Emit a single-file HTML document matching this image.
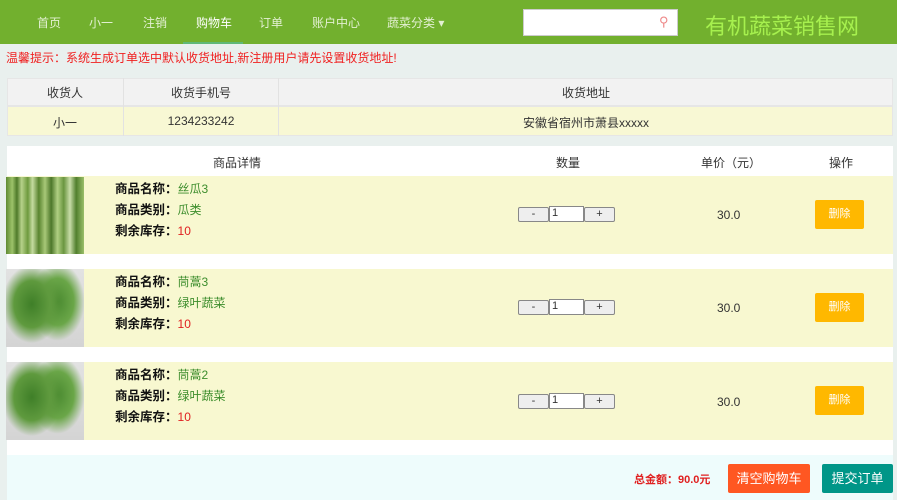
<!DOCTYPE html>
<html><head><meta charset="utf-8"><style>
*{margin:0;padding:0;box-sizing:border-box}
body{width:897px;height:500px;overflow:hidden;background:#e9f0ee;font-family:"Liberation Sans","Noto Sans CJK SC",sans-serif;font-size:12px;color:#333;position:relative}
.a{position:absolute}
.nav{left:0;top:0;width:897px;height:44px;background:#72b02e}
.nav span{position:absolute;top:14px;color:#e3f0d2;font-size:12px}
.c{text-align:center}
.img1{background:linear-gradient(90deg,#5f8a32 0,#9cc26a 8%,#4f7a2a 14%,#b7d28a 20%,#6e9a3e 28%,#c5dba0 34%,#5a8530 42%,#a8c878 50%,#4d772a 58%,#b0cf82 66%,#6a9640 74%,#c8dca8 82%,#52802e 90%,#9abf6a 100%)}
.img2{background:radial-gradient(ellipse 38% 50% at 33% 45%,#3f7f28 0,#5f9a3e 60%,transparent 100%),radial-gradient(ellipse 35% 50% at 66% 42%,#4a8a30 0,#6aa648 60%,transparent 100%),linear-gradient(#e2e2e2,#d4d4d4)}
.row{left:7px;width:886px;height:78px;background:#f8f8d0}
.lbl{font-weight:bold;color:#111;font-size:12.5px;line-height:21px}
.g{color:#3c8d2c;font-weight:normal;font-size:12px}
.r{color:#e02020;font-weight:normal;font-size:12px}
.qb{height:15px;border:1px solid #888;background:#eee;border-radius:2px;font-size:11px;text-align:center;line-height:12px}
.del{width:49px;height:29px;background:#ffb800;color:#fff;font-size:11px;text-align:center;line-height:29px;border-radius:2px}
</style></head><body>
<div class="a nav">
<span style="left:37px">首页</span><span style="left:89px">小一</span><span style="left:143px">注销</span><span style="left:196px;color:#fff">购物车</span><span style="left:259px">订单</span><span style="left:312px">账户中心</span><span style="left:387px">蔬菜分类 ▾</span>
<div class="a" style="left:183px;top:42px;width:60px;height:2px;background:#5fb878"></div>
<div class="a" style="left:523px;top:9px;width:155px;height:27px;background:#fff;border:1px solid #ccc"></div>
<div class="a" style="left:659px;top:14px;color:#e88;font-size:13px">⚲</div>
<div class="a" style="left:705px;top:9px;color:#a6f04e;font-size:22px">有机蔬菜销售网</div>
</div>
<div class="a" style="left:6px;top:49px;color:#f02020;font-size:12px">温馨提示：系统生成订单选中默认收货地址,新注册用户请先设置收货地址!</div>
<div class="a" style="left:7px;top:78px;width:886px;height:28px;background:#f2f2f2;border:1px solid #e6e6e6"></div>
<div class="a" style="left:7px;top:106px;width:886px;height:30px;background:#f8f8d4;border:1px solid #e6e6e6"></div>
<div class="a" style="left:123px;top:78px;width:1px;height:58px;background:#e2e2e2"></div>
<div class="a" style="left:278px;top:78px;width:1px;height:58px;background:#e2e2e2"></div>
<div class="a c" style="left:7px;top:84px;width:116px">收货人</div>
<div class="a c" style="left:124px;top:84px;width:154px">收货手机号</div>
<div class="a c" style="left:279px;top:84px;width:614px">收货地址</div>
<div class="a c" style="left:7px;top:114px;width:116px">小一</div>
<div class="a c" style="left:124px;top:114px;width:154px">1234233242</div>
<div class="a c" style="left:279px;top:114px;width:614px">安徽省宿州市萧县xxxxx</div>

<div class="a" style="left:7px;top:146px;width:886px;height:309px;background:#fff"></div>
<div class="a" style="left:213px;top:154px">商品详情</div>
<div class="a" style="left:556px;top:154px">数量</div>
<div class="a" style="left:701px;top:154px">单价（元）</div>
<div class="a" style="left:829px;top:154px">操作</div>

<div class="a row" style="top:176px"></div>
<div class="a row" style="top:269px"></div>
<div class="a row" style="top:362px"></div>
<div class="a img1" style="left:6px;top:177px;width:78px;height:77px"></div>
<div class="a img2" style="left:6px;top:269px;width:78px;height:78px"></div>
<div class="a img2" style="left:6px;top:362px;width:78px;height:78px"></div>

<div class="a lbl" style="left:115px;top:179px">商品名称：<span class="g">丝瓜3</span><br>商品类别：<span class="g">瓜类</span><br>剩余库存：<span class="r">10</span></div>
<div class="a lbl" style="left:115px;top:272px">商品名称：<span class="g">茼蒿3</span><br>商品类别：<span class="g">绿叶蔬菜</span><br>剩余库存：<span class="r">10</span></div>
<div class="a lbl" style="left:115px;top:365px">商品名称：<span class="g">茼蒿2</span><br>商品类别：<span class="g">绿叶蔬菜</span><br>剩余库存：<span class="r">10</span></div>

<div class="a qb" style="left:518px;top:207px;width:31px">-</div><div class="a" style="left:549px;top:206px;width:35px;height:16px;background:#fff;border:1px solid #888;font-size:11px;padding-left:2px">1</div><div class="a qb" style="left:584px;top:207px;width:31px">+</div>
<div class="a qb" style="left:518px;top:300px;width:31px">-</div><div class="a" style="left:549px;top:299px;width:35px;height:16px;background:#fff;border:1px solid #888;font-size:11px;padding-left:2px">1</div><div class="a qb" style="left:584px;top:300px;width:31px">+</div>
<div class="a qb" style="left:518px;top:394px;width:31px">-</div><div class="a" style="left:549px;top:393px;width:35px;height:16px;background:#fff;border:1px solid #888;font-size:11px;padding-left:2px">1</div><div class="a qb" style="left:584px;top:394px;width:31px">+</div>

<div class="a" style="left:717px;top:208px">30.0</div>
<div class="a" style="left:717px;top:301px">30.0</div>
<div class="a" style="left:717px;top:395px">30.0</div>
<div class="a del" style="left:815px;top:200px">删除</div>
<div class="a del" style="left:815px;top:293px">删除</div>
<div class="a del" style="left:815px;top:386px">删除</div>

<div class="a" style="left:7px;top:455px;width:886px;height:45px;background:#eefcfc"></div>
<div class="a" style="left:634px;top:471px;color:#e02020;font-weight:bold;font-size:11px">总金额：90.0元</div>
<div class="a c" style="left:728px;top:464px;width:82px;height:29px;background:#ff5722;color:#fff;font-size:13px;line-height:29px;border-radius:2px">清空购物车</div>
<div class="a c" style="left:822px;top:464px;width:71px;height:29px;background:#009688;color:#fff;font-size:13px;line-height:29px;border-radius:2px">提交订单</div>
</body></html>
